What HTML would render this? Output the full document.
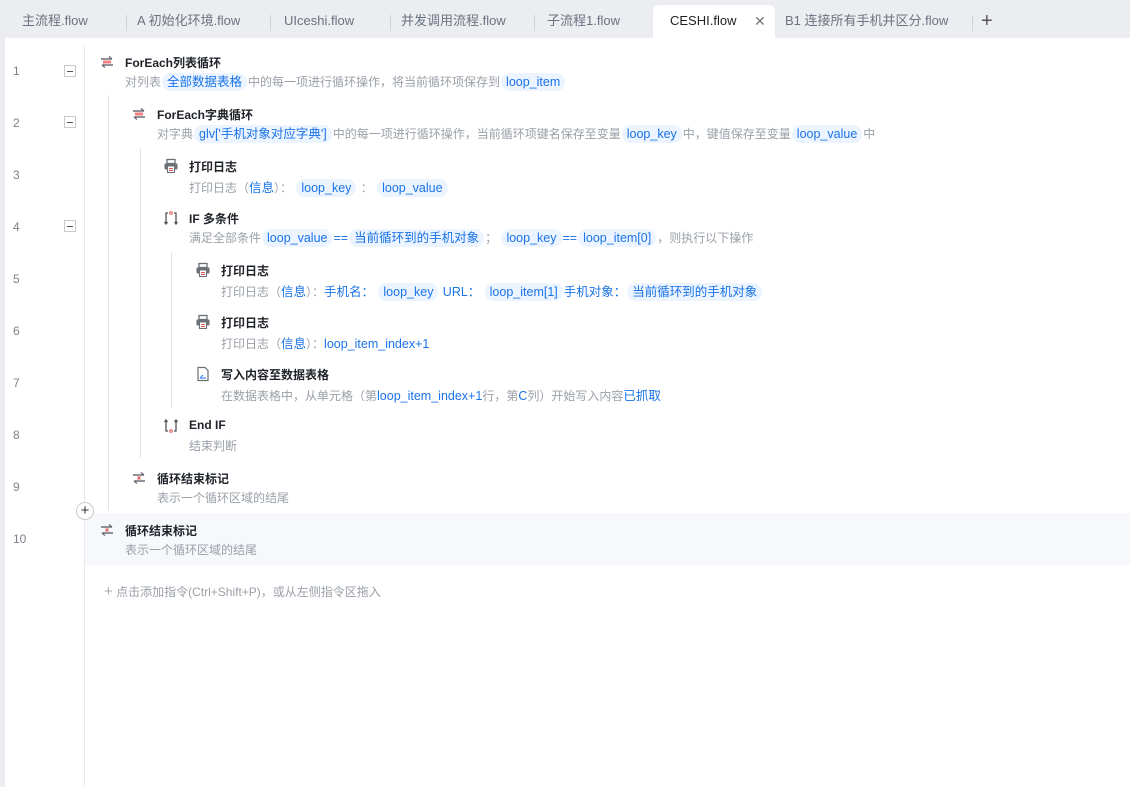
<!DOCTYPE html>
<html><head><meta charset="utf-8"><style>
*{margin:0;padding:0;box-sizing:border-box}
body{width:1130px;height:787px;background:#ebedf0;font-family:"Liberation Sans","Noto Sans CJK SC",sans-serif;position:relative;overflow:hidden}
.tab{position:absolute;top:0;height:38px;line-height:42px;font-size:13px;color:#6b7280;white-space:nowrap}
.sep{position:absolute;top:15px;width:1px;height:16px;background:#cfd2d8}
.act{position:absolute;left:653px;top:5px;width:122px;height:34px;background:#fff;border-radius:6px 6px 0 0;color:#222;font-size:13px;line-height:32px;padding-left:17px}
.main{position:absolute;left:5px;top:38px;width:1125px;height:749px;background:#fff}
.gut{position:absolute;left:84px;top:45px;width:1px;height:742px;background:#e8e9ec}
.ln{position:absolute;left:13px;font-size:12px;color:#7d828a}
.cb{position:absolute;left:64px;width:12px;height:12px;border:1px solid #c8cacf;background:#fff}
.cb:after{content:"";position:absolute;left:2px;top:4.5px;width:6px;height:1px;background:#555}
.vl{position:absolute;width:1px;background:#e3e4e8}
.t{position:absolute;font-size:12px;font-weight:bold;color:#1f2329;white-space:nowrap}
.d{position:absolute;font-size:12px;color:#9aa0a8;white-space:nowrap}
.c{display:inline-block;background:#ebf4ff;color:#1a73e8;border-radius:9px;padding:0 5px;line-height:18px;font-weight:normal;font-size:12.5px;margin:0 1px}
.b{color:#1a73e8;font-size:12.5px}
.ic{position:absolute;width:16px;height:16px}
</style></head><body>
<div class="tab" style="left:22px">主流程.flow</div>
<div class="sep" style="left:126px"></div>
<div class="tab" style="left:137px">A 初始化环境.flow</div>
<div class="sep" style="left:270px"></div>
<div class="tab" style="left:284px">UIceshi.flow</div>
<div class="sep" style="left:390px"></div>
<div class="tab" style="left:401px">并发调用流程.flow</div>
<div class="sep" style="left:534px"></div>
<div class="tab" style="left:547px">子流程1.flow</div>
<div class="act">CESHI.flow<span style="position:absolute;left:101px;top:0;color:#777;font-size:14px">✕</span></div>
<div class="tab" style="left:785px">B1 连接所有手机并区分.flow</div>
<div class="sep" style="left:972px"></div>
<div class="tab" style="left:981px;font-size:20px;line-height:42px;color:#555">+</div>
<div class="main"></div>
<div class="gut"></div>
<div class="vl" style="left:108px;top:95px;height:415px"></div>
<div class="vl" style="left:140px;top:148px;height:310px"></div>
<div class="vl" style="left:171px;top:252px;height:156px"></div>
<div style="position:absolute;left:85px;top:513px;width:1045px;height:52px;background:#f7f8fb"></div>
<div style="position:absolute;left:76px;top:502px;width:18px;height:18px;border:1px solid #ccc;border-radius:50%;background:#fff;text-align:center;line-height:15px;font-size:15px;color:#333">+</div>

<svg width="0" height="0" style="position:absolute"><defs>
<g id="loop"><path d="M2 5h11M10 2.5l3 2.5M14 11H3M6 13.5L3 11" stroke="#6b6f76" stroke-width="1.4" fill="none"/><rect x="4" y="6.5" width="8" height="3" fill="#f08080"/></g>
<g id="prt"><rect x="4" y="1.5" width="8" height="4" fill="none" stroke="#6b6f76" stroke-width="1.3"/><rect x="1.5" y="5.5" width="13" height="6" rx="1" fill="#6b6f76"/><rect x="4.5" y="8" width="7" height="6.5" fill="#fff" stroke="#6b6f76" stroke-width="1"/><path d="M6 10.5h4M6 12.5h4" stroke="#e05555"/></g>
<g id="ifi"><path d="M3 14V3h2M13 14V3h-2M1.5 12L3 14l1.5-2M11.5 12L13 14l1.5-2" stroke="#555" stroke-width="1.3" fill="none"/><circle cx="8" cy="3" r="1.3" fill="none" stroke="#e05555"/></g>
<g id="eif"><path d="M3 2v11h2M13 2v11h-2M1.5 4L3 2l1.5 2M11.5 4L13 2l1.5 2" stroke="#555" stroke-width="1.3" fill="none"/><circle cx="8" cy="13" r="1.3" fill="none" stroke="#e05555"/></g>
<g id="doc"><path d="M3 1.5h7l3 3v10H3z" fill="none" stroke="#6b6f76" stroke-width="1.2"/><path d="M5 12h6M5 12l3-3" stroke="#4a8df0" stroke-width="1.2"/></g>
<g id="lend"><path d="M2 5h11M10 2.5l3 2.5M14 11H3M6 13.5L3 11" stroke="#6b6f76" stroke-width="1.4" fill="none"/><path d="M6.5 6.5l3 3M9.5 6.5l-3 3" stroke="#e05555" stroke-width="1.2"/></g>
</defs></svg>

<div class="ln" style="top:64px">1</div><div class="cb" style="top:65px"></div>
<svg class="ic" style="left:99px;top:54px"><use href="#loop"/></svg>
<div class="t" style="left:125px;top:54px">ForEach列表循环</div>
<div class="d" style="left:125px;top:73px">对列表<span class="c">全部数据表格</span>中的每一项进行循环操作，将当前循环项保存到<span class="c">loop_item</span></div>

<div class="ln" style="top:116px">2</div><div class="cb" style="top:116px"></div>
<svg class="ic" style="left:131px;top:106px"><use href="#loop"/></svg>
<div class="t" style="left:157px;top:106px">ForEach字典循环</div>
<div class="d" style="left:157px;top:125px">对字典<span class="c">glv['手机对象对应字典']</span>中的每一项进行循环操作，当前循环项键名保存至变量<span class="c">loop_key</span>中，键值保存至变量<span class="c">loop_value</span>中</div>

<div class="ln" style="top:168px">3</div>
<svg class="ic" style="left:163px;top:158px"><use href="#prt"/></svg>
<div class="t" style="left:189px;top:158px">打印日志</div>
<div class="d" style="left:189px;top:177px">打印日志（<span class="b">信息</span>）： <span class="c">loop_key</span> ： <span class="c">loop_value</span></div>

<div class="ln" style="top:220px">4</div><div class="cb" style="top:220px"></div>
<svg class="ic" style="left:163px;top:210px"><use href="#ifi"/></svg>
<div class="t" style="left:189px;top:210px">IF 多条件</div>
<div class="d" style="left:189px;top:229px">满足全部条件<span class="c">loop_value</span><span class="b">==</span><span class="c">当前循环到的手机对象</span>； <span class="c">loop_key</span><span class="b">==</span><span class="c">loop_item[0]</span>，则执行以下操作</div>

<div class="ln" style="top:272px">5</div>
<svg class="ic" style="left:195px;top:262px"><use href="#prt"/></svg>
<div class="t" style="left:221px;top:262px">打印日志</div>
<div class="d" style="left:221px;top:281px">打印日志（<span class="b">信息</span>）：<span class="b">手机名：</span> <span class="c">loop_key</span> <span class="b">URL：</span> <span class="c">loop_item[1]</span><span class="b">手机对象：</span><span class="c">当前循环到的手机对象</span></div>

<div class="ln" style="top:324px">6</div>
<svg class="ic" style="left:195px;top:314px"><use href="#prt"/></svg>
<div class="t" style="left:221px;top:314px">打印日志</div>
<div class="d" style="left:221px;top:333px">打印日志（<span class="b">信息</span>）：<span class="b">loop_item_index+1</span></div>

<div class="ln" style="top:376px">7</div>
<svg class="ic" style="left:195px;top:366px"><use href="#doc"/></svg>
<div class="t" style="left:221px;top:366px">写入内容至数据表格</div>
<div class="d" style="left:221px;top:385px">在数据表格中，从单元格（第<span class="b">loop_item_index+1</span>行，第<span class="b">C</span>列）开始写入内容<span class="b">已抓取</span></div>

<div class="ln" style="top:428px">8</div>
<svg class="ic" style="left:163px;top:418px"><use href="#eif"/></svg>
<div class="t" style="left:189px;top:418px">End IF</div>
<div class="d" style="left:189px;top:437px">结束判断</div>

<div class="ln" style="top:480px">9</div>
<svg class="ic" style="left:131px;top:470px"><use href="#lend"/></svg>
<div class="t" style="left:157px;top:470px">循环结束标记</div>
<div class="d" style="left:157px;top:489px">表示一个循环区域的结尾</div>

<div class="ln" style="top:532px">10</div>
<svg class="ic" style="left:99px;top:522px"><use href="#lend"/></svg>
<div class="t" style="left:125px;top:522px">循环结束标记</div>
<div class="d" style="left:125px;top:541px">表示一个循环区域的结尾</div>

<div class="d" style="left:104px;top:583px"><span style="font-size:15px;color:#aaa">+</span> 点击添加指令(Ctrl+Shift+P)，或从左侧指令区拖入</div>
</body></html>
